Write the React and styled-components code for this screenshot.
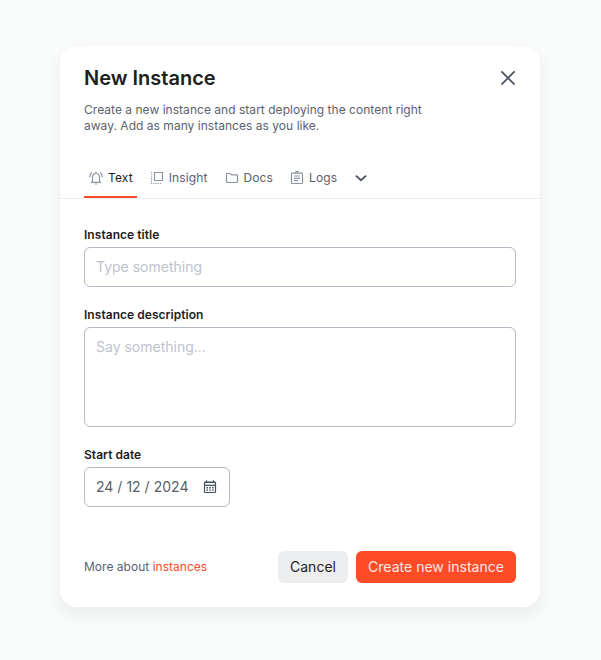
import React from "react";
import styled, { createGlobalStyle } from "styled-components";

const GlobalStyle = createGlobalStyle`
  *, *::before, *::after { box-sizing: border-box; }
  body {
    margin: 0;
    background: #f9fbfa;
    font-family: Inter, "Liberation Sans", sans-serif;
    color: #1c1e21;
  }
  button, input, textarea { font: inherit; letter-spacing: inherit; }
`;

const Page = styled.main`
  display: flex;
  justify-content: center;
  align-items: flex-start;
  width: 601px;
  height: 660px;
  padding: 46px 61px 0 60px;
  overflow: hidden;
`;

const Dialog = styled.section`
  display: flex;
  flex-direction: column;
  width: 480px;
  height: 561px;
  background: #fff;
  border-radius: 16px;
  box-shadow: 0 8px 16px rgba(30, 40, 36, 0.06);
`;

const Header = styled.header`
  display: flex;
  justify-content: space-between;
  height: 112px;
  padding: 20px 24px 0;
`;

const Title = styled.h1`
  margin: 0;
  font-size: 20px;
  font-weight: 600;
  line-height: 24px;
  letter-spacing: 0;
`;

const Summary = styled.p`
  width: 350px;
  margin: 12px 0 0;
  font-size: 12px;
  line-height: 16px;
  letter-spacing: 0.03px;
  color: #5a626f;
`;

const CloseButton = styled.button`
  display: flex;
  width: 16px;
  height: 24px;
  padding: 0;
  align-items: center;
  border: 0;
  background: none;
  color: #4a5361;
`;

const TabList = styled.nav`
  display: flex;
  gap: 8px;
  height: 41px;
  padding: 0 24px;
  border-bottom: 1px solid #ebecee;
`;

const Tab = styled.button`
  display: flex;
  align-items: center;
  gap: 4px;
  height: 40px;
  padding: 0 4px;
  border: 0;
  background: none;
  box-shadow: ${(p) => (p.$active ? "inset 0 -2px #ff4b26" : "none")};
  color: ${(p) => (p.$active ? "#1c1e21" : "#5a626f")};
  font-size: 12px;
  line-height: 16px;
  letter-spacing: 0.12px;
`;

const Icon = styled.svg`
  display: block;
  flex: none;
  width: 16px;
  height: 16px;
  fill: none;
  stroke: ${(p) => p.$color || "#8d95a5"};
  stroke-width: ${(p) => p.$weight || 1.2};
`;

const Form = styled.form`
  display: flex;
  flex-direction: column;
  gap: 20px;
  height: 352px;
  padding: 28px 24px 0;
`;

const Field = styled.label`
  display: flex;
  flex-direction: column;
  gap: 4px;
`;

const Label = styled.span`
  font-size: 12px;
  font-weight: 600;
  line-height: 16px;
  letter-spacing: 0.04px;
`;

const Input = styled.input`
  display: block;
  width: 100%;
  height: ${(p) => p.$height || 40}px;
  padding: ${(p) => p.$padding || "0 11px 1px"};
  border: 1px solid #b5b8c5;
  border-radius: 6px;
  outline: 0;
  resize: none;
  background: #fff;
  color: #555e6b;
  font-size: 14px;
  line-height: 20px;
  letter-spacing: 0;
  &::placeholder { color: #bec2ce; opacity: 1; }
`;

const DateControl = styled.span`
  display: flex;
  align-items: center;
  justify-content: space-between;
  width: 146px;
  height: 40px;
  padding: 0 11px;
  border: 1px solid #b5b8c5;
  border-radius: 6px;
  color: #555e6b;
  font-size: 14px;
  line-height: 20px;
  letter-spacing: 0.02px;
`;

const Footer = styled.footer`
  display: flex;
  align-items: center;
  gap: 8px;
  height: 32px;
  padding: 0 24px;
`;

const More = styled.span`
  margin-right: auto;
  font-size: 12px;
  line-height: 16px;
  letter-spacing: 0.02px;
  color: #5a626f;
`;

const Link = styled.a`
  color: #ff4b26;
`;

const Button = styled.button`
  width: ${(p) => p.$width}px;
  height: 32px;
  padding: 0;
  border: 0;
  border-radius: 6px;
  background: ${(p) => (p.$primary ? "#ff4b26" : "#edeef0")};
  color: ${(p) => (p.$primary ? "#ffe9e1" : "#1c1e21")};
  font-size: 14px;
  line-height: 20px;
  letter-spacing: 0.02px;
  white-space: nowrap;
`;

const BellIcon = () => (
  <Icon viewBox="0 0 16 16">
    <path d="M4.5 12V7.2C4.5 4.8 6 3.5 8 3.5s3.5 1.3 3.5 3.7V12M3 12.4h10M8 1.8v1.7M6.9 14h2.2" />
    <path d="M1.7 7.2c0-2 .8-3.7 2.3-4.7M14.3 7.2c0-2-.8-3.7-2.3-4.7" />
  </Icon>
);

const InsightIcon = () => (
  <Icon viewBox="0 0 16 16">
    <path d="M5.5 2.5h8v8h-8z" />
    <path d="M2.5 2v12M2 13.5h11" strokeDasharray="1.1 1.1" />
  </Icon>
);

const FolderIcon = () => (
  <Icon viewBox="0 0 16 16">
    <path d="M3.3 3.5h2.9l1.4 1.4h5.1c.5 0 .8.3.8.8v6c0 .5-.3.8-.8.8H3.3c-.5 0-.8-.3-.8-.8V4.3c0-.5.3-.8.8-.8z" />
  </Icon>
);

const LogsIcon = () => (
  <Icon viewBox="0 0 16 16">
    <path d="M3.3 3.2h9.4c.5 0 .8.3.8.8v8.7c0 .5-.3.8-.8.8H3.3c-.5 0-.8-.3-.8-.8V4c0-.5.3-.8.8-.8zM6.4 3a1.6 1.6 0 0 1 3.2 0M5 6h6M5 8.3h6M5 10.6h4" />
  </Icon>
);

const CalendarIcon = () => (
  <Icon viewBox="0 0 16 16" $color="#4a5361">
    <path d="M3.2 3h9.6c.4 0 .7.3.7.7v9.1c0 .4-.3.7-.7.7H3.2c-.4 0-.7-.3-.7-.7V3.7c0-.4.3-.7.7-.7zM2.5 3.5h11M2.5 6.3h11M4.5 1.3V3M11.5 1.3V3" />
    <path d="M4.4 8.8h7.5M4.4 11.1h7.5" strokeDasharray="1.6 1.3" strokeWidth="1.4" />
  </Icon>
);

export default function App() {
  return (
    <>
      <GlobalStyle />
      <Page>
        <Dialog>
          <Header>
            <div>
              <Title>New Instance</Title>
              <Summary>
                Create a new instance and start deploying the content right
                <br />
                away. Add as many instances as you like.
              </Summary>
            </div>
            <CloseButton aria-label="Close">
              <Icon viewBox="0 0 16 16" $color="#4a5361" $weight={1.7}>
                <path d="M1.4 1.4l13.2 13.2M14.6 1.4L1.4 14.6" />
              </Icon>
            </CloseButton>
          </Header>
          <TabList>
            <Tab $active><BellIcon />Text</Tab>
            <Tab><InsightIcon />Insight</Tab>
            <Tab><FolderIcon />Docs</Tab>
            <Tab><LogsIcon />Logs</Tab>
            <Tab aria-label="More tabs">
              <Icon viewBox="0 0 16 16" $color="#4a5361" $weight={1.8}>
                <path d="M2.9 5.7L8 10.2l5.1-4.5" />
              </Icon>
            </Tab>
          </TabList>
          <Form>
            <Field>
              <Label>Instance title</Label>
              <Input placeholder="Type something" />
            </Field>
            <Field>
              <Label>Instance description</Label>
              <Input as="textarea" $height={100} $padding="9px 11px" placeholder="Say something..." />
            </Field>
            <Field>
              <Label>Start date</Label>
              <DateControl>24 / 12 / 2024<CalendarIcon /></DateControl>
            </Field>
          </Form>
          <Footer>
            <More>More about <Link>instances</Link></More>
            <Button $width={70}>Cancel</Button>
            <Button $width={160} $primary>Create new instance</Button>
          </Footer>
        </Dialog>
      </Page>
    </>
  );
}
